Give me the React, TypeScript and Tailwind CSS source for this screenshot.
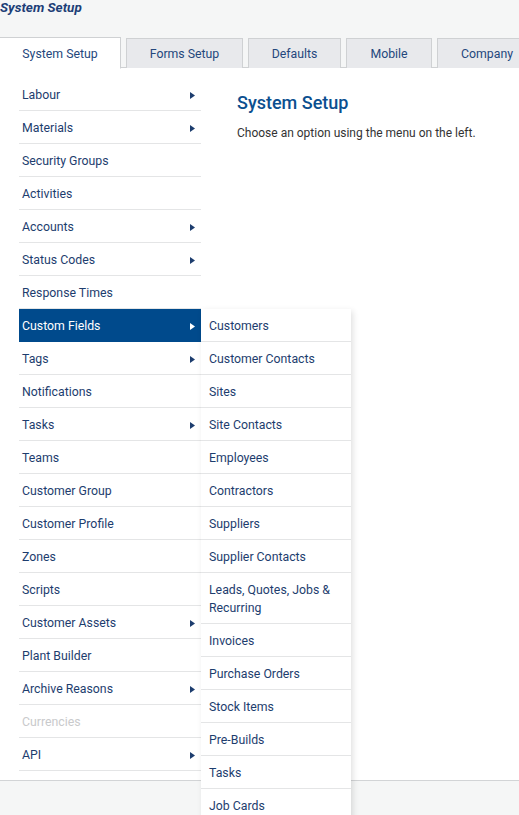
import React from "react";

const MENU: { label: string; sub?: boolean; disabled?: boolean }[] = [
  { label: "Labour", sub: true },
  { label: "Materials", sub: true },
  { label: "Security Groups" },
  { label: "Activities" },
  { label: "Accounts", sub: true },
  { label: "Status Codes", sub: true },
  { label: "Response Times" },
  { label: "Custom Fields", sub: true },
  { label: "Tags", sub: true },
  { label: "Notifications" },
  { label: "Tasks", sub: true },
  { label: "Teams" },
  { label: "Customer Group" },
  { label: "Customer Profile" },
  { label: "Zones" },
  { label: "Scripts" },
  { label: "Customer Assets", sub: true },
  { label: "Plant Builder" },
  { label: "Archive Reasons", sub: true },
  { label: "Currencies", disabled: true },
  { label: "API", sub: true },
];

const SUBMENU = [
  "Customers",
  "Customer Contacts",
  "Sites",
  "Site Contacts",
  "Employees",
  "Contractors",
  "Suppliers",
  "Supplier Contacts",
  "Leads, Quotes, Jobs & Recurring",
  "Invoices",
  "Purchase Orders",
  "Stock Items",
  "Pre-Builds",
  "Tasks",
  "Job Cards",
];

const TABS = [
  { label: "System Setup", w: "w-[121px]" },
  { label: "Forms Setup", w: "w-[117px]" },
  { label: "Defaults", w: "w-[93px]" },
  { label: "Mobile", w: "w-[86px]" },
  { label: "Company", w: "w-[100px]" },
];

function Arrow({ white }: { white?: boolean }) {
  return (
    <svg width="5" height="7" viewBox="0 0 5 7" className="shrink-0">
      <path d="M0 0 L5 3.5 L0 7 Z" fill={white ? "#ffffff" : "#1d3d6e"} />
    </svg>
  );
}

export default function App() {
  return (
    <div className="w-[519px] h-[815px] overflow-hidden bg-[#f5f6f6] font-['Roboto',sans-serif] text-[12.3px]">
      <div className="h-[37px]">
        <h1 className="text-[13.5px] font-bold italic text-[#1d3e77] leading-[15px]">System Setup</h1>
      </div>

      {/* tabs */}
      <div className="flex gap-[5px] h-[31px] border-b border-[#cfd1d3] whitespace-nowrap">
        {TABS.map((t, i) => (
          <div
            key={t.label}
            className={`${t.w} shrink-0 flex items-center justify-center pt-[2px] border border-[#cfd1d3] text-[#24477c] ${
              i === 0 ? "bg-white border-l-0 border-b-white h-[32px] -mb-[1px]" : "bg-[#e8e9ec] border-b-0 mt-[1px] h-[30px]"
            }`}
          >
            {t.label}
          </div>
        ))}
      </div>

      {/* body */}
      <div className="bg-white h-[713px] border-b border-[#d2d4d6] flex">
        <div className="relative ml-[19px] w-[182px] pt-[10px]">
          {MENU.map((m) => {
            const active = m.label === "Custom Fields";
            return (
              <div
                key={m.label}
                className={`h-[33px] flex items-center justify-between pt-[2px] pl-[3px] pr-[6px] border-b ${
                  active ? "bg-[#004a8c] text-white border-[#004a8c]" : "border-[#e4e5e6]"
                } ${m.disabled ? "text-[#c9cacc]" : active ? "" : "text-[#1d3d6e]"}`}
              >
                <span>{m.label}</span>
                {m.sub && <Arrow white={active} />}
              </div>
            );
          })}

          {/* flyout submenu */}
          <div className="absolute left-[182px] top-[241px] w-[150px] bg-white shadow-[2px_2px_6px_rgba(0,0,0,0.12)] z-10">
            {SUBMENU.map((s) => (
              <div
                key={s}
                className={`border-b border-[#e4e5e6] px-2 pt-[2px] text-[#1d3d6e] flex items-center ${
                  s.startsWith("Leads") ? "h-[51px] leading-[18px]" : "h-[33px]"
                }`}
              >
                <span>{s}</span>
              </div>
            ))}
          </div>
        </div>

        <div className="pl-[36px] pt-[24px]">
          <h2 className="text-[18px] font-medium text-[#0b4f8f] leading-[22px]">System Setup</h2>
          <p className="mt-[10px] text-[#333333] text-[12px]">Choose an option using the menu on the left.</p>
        </div>
      </div>
    </div>
  );
}
